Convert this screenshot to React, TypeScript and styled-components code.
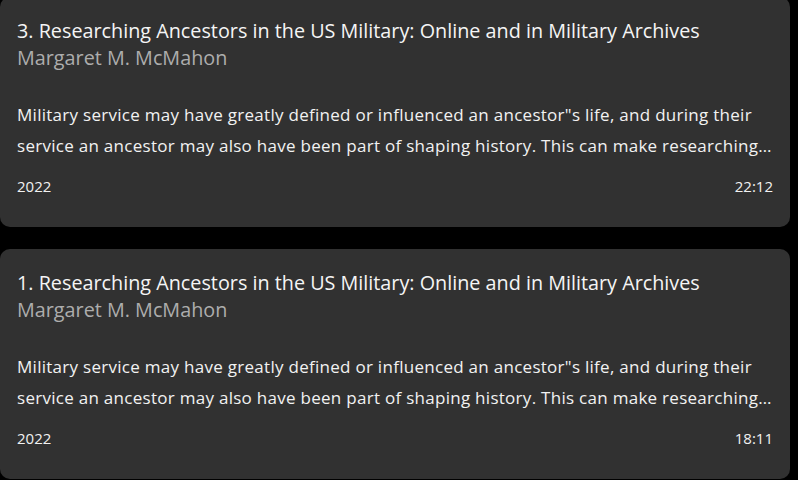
import styled, { createGlobalStyle } from 'styled-components';

const GlobalStyle = createGlobalStyle`
  html, body {
    margin: 0;
    padding: 0;
    background: #000;
    overflow: hidden;
  }
  body {
    font-family: "Open Sans", "Noto Sans", sans-serif;
    color: #fff;
  }
`;

interface Lecture {
  id: number;
  title: string;
  author: string;
  description: string;
  year: string;
  duration: string;
}

const lectures: Lecture[] = [
  {
    id: 3,
    title: 'Researching Ancestors in the US Military: Online and in Military Archives',
    author: 'Margaret M. McMahon',
    description:
      'Military service may have greatly defined or influenced an ancestor"s life, and during their service an ancestor may also have been part of shaping history. This can make researching military records a rewarding part of your family history research.',
    year: '2022',
    duration: '22:12',
  },
  {
    id: 1,
    title: 'Researching Ancestors in the US Military: Online and in Military Archives',
    author: 'Margaret M. McMahon',
    description:
      'Military service may have greatly defined or influenced an ancestor"s life, and during their service an ancestor may also have been part of shaping history. This can make researching military records a rewarding part of your family history research.',
    year: '2022',
    duration: '18:11',
  },
];

// list is scrolled a few pixels, first card top is just out of view
const List = styled.div`
  display: flex;
  flex-direction: column;
  gap: 22px;
  margin-top: -3px;
  padding-right: 8px;
`;

const Card = styled.article`
  background: #313131;
  border-radius: 10px;
  padding: 20px 17px 0 17px;
  height: 230px;
  box-sizing: border-box;
`;

const Title = styled.h3`
  margin: 0;
  font-size: 19.8px;
  line-height: 27px;
  font-weight: 400;
  color: #f5f5f5;
  white-space: nowrap;
`;

const Author = styled.div`
  font-size: 19.8px;
  line-height: 27px;
  color: #adadad;
`;

const Description = styled.p`
  margin: 28px 0 0 0;
  font-size: 17px;
  letter-spacing: 0.28px;
  line-height: 31px;
  color: #f2f2f2;
  display: -webkit-box;
  -webkit-line-clamp: 2;
  -webkit-box-orient: vertical;
  overflow: hidden;
`;

const Meta = styled.div`
  display: flex;
  justify-content: space-between;
  margin-top: 15px;
  font-size: 15px;
  line-height: 20px;
  color: #f2f2f2;
`;

export default function App() {
  return (
    <>
      <GlobalStyle />
      <List>
        {lectures.map(l => (
          <Card key={l.id}>
            <Title>{l.id}. {l.title}</Title>
            <Author>{l.author}</Author>
            <Description>{l.description}</Description>
            <Meta>
              <span>{l.year}</span>
              <span>{l.duration}</span>
            </Meta>
          </Card>
        ))}
      </List>
    </>
  );
}
